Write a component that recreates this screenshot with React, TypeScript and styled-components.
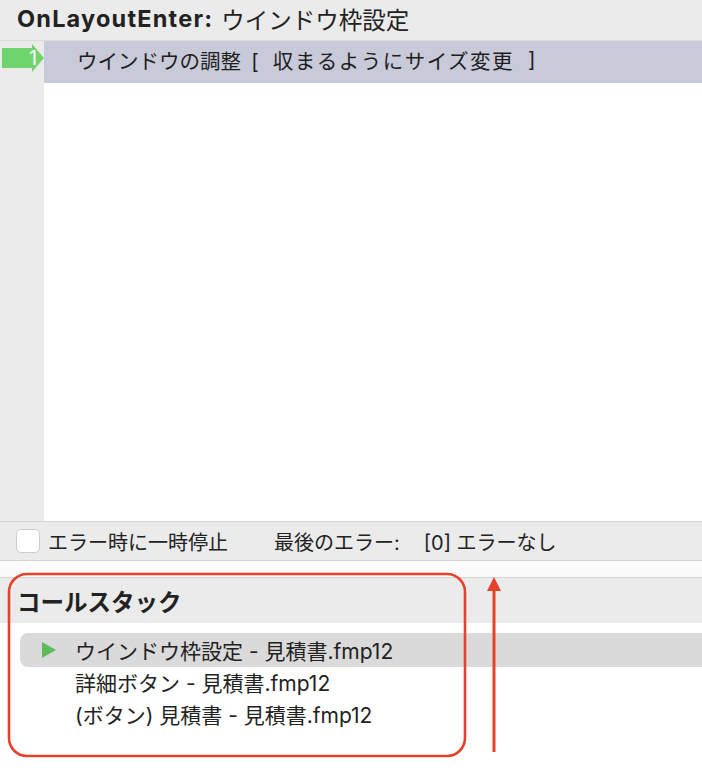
import { FC } from "react";
import styled, { createGlobalStyle } from "styled-components";

const GlobalStyle = createGlobalStyle`
  html, body {
    margin: 0;
    padding: 0;
    background: #ffffff;
  }
  body {
    font-family: "Inter", "Noto Sans CJK JP", sans-serif;
    color: #222222;
  }
`;

const Page = styled.div`
  position: relative;
  width: 702px;
  height: 776px;
  display: flex;
  flex-direction: column;
  overflow: hidden;
`;

const TitleBar = styled.div`
  height: 41px;
  flex: none;
  display: flex;
  align-items: center;
  padding-left: 17px;
  padding-bottom: 3px;
  box-sizing: border-box;
  background: #ebebeb;
  border-bottom: 1px solid #dcdcdc;
  font-size: 23.5px;
  color: #222;
  white-space: nowrap;

  b {
    font-weight: 700;
    letter-spacing: 1.2px;
    margin-right: 8px;
  }
`;

const ScriptArea = styled.div`
  height: 480px;
  flex: none;
  display: grid;
  grid-template-columns: 44px 1fr;
`;

const Gutter = styled.div`
  background: #ebebeb;
`;

const Lines = styled.div`
  background: #ffffff;
`;

const ScriptRow = styled.div<{ $active?: boolean }>`
  height: 42px;
  box-sizing: border-box;
  display: flex;
  align-items: center;
  padding-left: 33px;
  padding-bottom: 5px;
  font-size: 20.5px;
  color: #1e1e1e;
  white-space: pre;
  background: ${(p) => (p.$active ? "#c8cad9" : "transparent")};
`;

const Wide = styled.span`
  letter-spacing: 1.5px;
`;

const GutterRow = styled.div`
  position: relative;
  height: 42px;
`;

const LineNumber = styled.span`
  position: absolute;
  left: 29px;
  top: 5px;
  font-size: 20px;
  color: #ffffff;
  font-weight: 400;
`;

const StatusBar = styled.div`
  height: 38px;
  flex: none;
  display: flex;
  align-items: center;
  padding-left: 16px;
  background: #ebebeb;
  border-top: 1px solid #d4d4d4;
  border-bottom: 1px solid #d4d4d4;
  font-size: 20px;
  color: #222;
  white-space: nowrap;
`;

const CheckBox = styled.span`
  width: 22px;
  height: 22px;
  border: 1px solid #cdcdcd;
  border-radius: 5px;
  background: #ffffff;
  margin-right: 8px;
`;

const StatusLabel = styled.span<{ $gap?: number }>`
  margin-left: ${(p) => p.$gap ?? 0}px;
`;

const Strip = styled.div`
  height: 16px;
  flex: none;
  background: #fbfbfb;
  border-bottom: 1px solid #d4d4d4;
`;

const SectionHeader = styled.div`
  height: 45px;
  flex: none;
  display: flex;
  align-items: center;
  padding-left: 17px;
  background: #ebebeb;
  font-size: 23.5px;
  font-weight: 700;
  color: #222;
`;

const StackList = styled.div`
  flex: 1;
  padding-top: 10px;
  padding-left: 20px;
  background: #ffffff;
`;

const StackRow = styled.div<{ $selected?: boolean }>`
  height: ${(p) => (p.$selected ? 34 : 32)}px;
  box-sizing: border-box;
  display: flex;
  align-items: center;
  padding-left: 22px;
  padding-bottom: ${(p) => (p.$selected ? 0 : 3)}px;
  font-size: 21px;
  color: #222;
  white-space: nowrap;
  border-radius: 8px 0 0 8px;
  background: ${(p) => (p.$selected ? "#dadada" : "transparent")};
`;

const Marker = styled.span`
  width: 33px;
  flex: none;
  display: flex;
  align-items: center;
`;

const Annotation = styled.svg`
  position: absolute;
  left: 0;
  top: 0;
  pointer-events: none;
`;

const StepArrow: FC = () => (
  <svg width="44" height="30" viewBox="0 0 44 30" style={{ position: "absolute", left: 0, top: 3 }}>
    <rect x="2" y="4" width="32" height="20" fill="#6fd46c" />
    <polygon points="32,0 44,14 32,28" fill="#6fd46c" />
  </svg>
);

const PlayIcon: FC = () => (
  <svg width="14" height="16" viewBox="0 0 14 16">
    <polygon points="0,0 14,8 0,16" fill="#5dbb5a" />
  </svg>
);

const stack = [
  "ウインドウ枠設定 - 見積書.fmp12",
  "詳細ボタン - 見積書.fmp12",
  "(ボタン) 見積書 - 見積書.fmp12",
];

export default function App() {
  return (
    <>
      <GlobalStyle />
      <Page>
        <TitleBar>
          <b>OnLayoutEnter:</b>ウインドウ枠設定
        </TitleBar>
        <ScriptArea>
          <Gutter>
            <GutterRow>
              <StepArrow />
              <LineNumber>1</LineNumber>
            </GutterRow>
          </Gutter>
          <Lines>
            <ScriptRow $active>
              {"ウインドウの調整\u2002[\u2002\u2009"}
              <Wide>収まるようにサイズ変更</Wide>
              {"\u2002\u2009]"}
            </ScriptRow>
          </Lines>
        </ScriptArea>
        <StatusBar>
          <CheckBox />
          <StatusLabel>エラー時に一時停止</StatusLabel>
          <StatusLabel $gap={46}>最後のエラー:</StatusLabel>
          <StatusLabel $gap={24}>[0] エラーなし</StatusLabel>
        </StatusBar>
        <Strip />
        <SectionHeader>コールスタック</SectionHeader>
        <StackList>
          {stack.map((item, i) => (
            <StackRow key={item} $selected={i === 0}>
              <Marker>{i === 0 && <PlayIcon />}</Marker>
              {item}
            </StackRow>
          ))}
        </StackList>
        <Annotation width="702" height="776" viewBox="0 0 702 776">
          <rect x="9" y="574" width="456" height="182" rx="18" fill="none" stroke="#e8412a" strokeWidth="2.6" />
          <line x1="494" y1="752" x2="494" y2="588" stroke="#e8412a" strokeWidth="3" />
          <polygon points="494,577 501,591 487,591" fill="#e8412a" />
        </Annotation>
      </Page>
    </>
  );
}
